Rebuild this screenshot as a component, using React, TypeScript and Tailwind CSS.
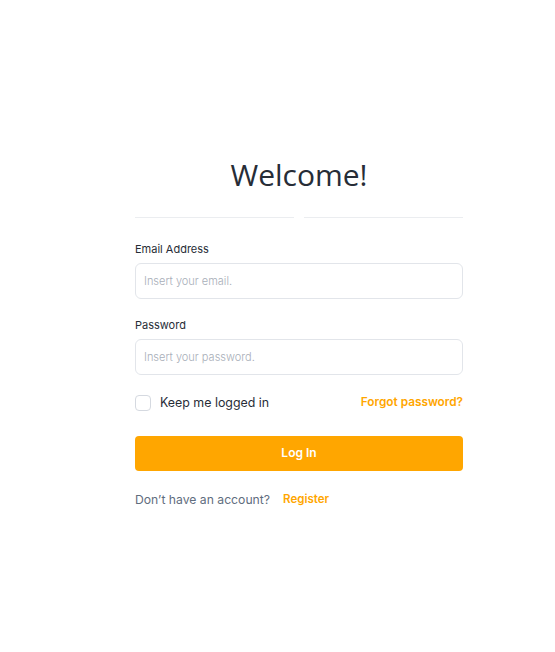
import { useState } from "react"

export default function App() {
  const [email, setEmail] = useState("")
  const [password, setPassword] = useState("")
  const [remember, setRemember] = useState(false)

  return (
    <div className="min-h-[652px] w-full bg-white font-['Inter',sans-serif]">
      <div className="w-[328px] pt-[153px] ml-[135px]">
        <h1 className="text-center text-[30px] leading-[44px] text-[#272d37] font-['Open_Sans',sans-serif]">
          Welcome!
        </h1>

        <div className="flex gap-[10px] mt-[20px]">
          <div className="flex-1 h-px bg-[#ebedf0]" />
          <div className="flex-1 h-px bg-[#ebedf0]" />
        </div>

        <form className="mt-[23px]" onSubmit={(e) => e.preventDefault()}>
          <label className="block text-[11px] text-[#272d37] leading-[16px]">Email Address</label>
          <input
            value={email}
            onChange={(e) => setEmail(e.target.value)}
            placeholder="Insert your email."
            className="mt-[6px] w-full h-[36px] rounded-[6px] border border-[#e2e5ea] px-[8px] text-[11px] font-light text-[#272d37] placeholder-[#a8aeb8] focus:outline-none"
          />

          <label className="block mt-[18px] text-[11px] text-[#272d37] leading-[16px]">Password</label>
          <input
            type="password"
            value={password}
            onChange={(e) => setPassword(e.target.value)}
            placeholder="Insert your password."
            className="mt-[6px] w-full h-[36px] rounded-[6px] border border-[#e2e5ea] px-[8px] text-[11px] font-light text-[#272d37] placeholder-[#a8aeb8] focus:outline-none"
          />

          <div className="mt-[19px] flex items-center justify-between">
            <label className="flex items-center gap-[9px] cursor-pointer">
              <button
                type="button"
                onClick={() => setRemember(!remember)}
                className={`w-[16px] h-[16px] rounded-[4px] border ${remember ? "bg-[#ffa600] border-[#ffa600]" : "border-[#d5d9e0] bg-white"}`}
              />
              <span className="text-[12.4px] text-[#272d37]">Keep me logged in</span>
            </label>
            <a href="#" className="text-[11.8px] font-semibold text-[#ffa600]">Forgot password?</a>
          </div>

          <button
            type="submit"
            className="mt-[23px] w-full h-[35px] rounded-[4px] bg-[#ffa600] text-white text-[12px] font-semibold"
          >
            Log In
          </button>

          <div className="mt-[20px] flex items-center gap-[13px]">
            <span className="text-[12.2px] text-[#5f6d7e]">Don’t have an account?</span>
            <a href="#" className="text-[11.5px] font-semibold text-[#ffa600]">Register</a>
          </div>
        </form>
      </div>
    </div>
  )
}
